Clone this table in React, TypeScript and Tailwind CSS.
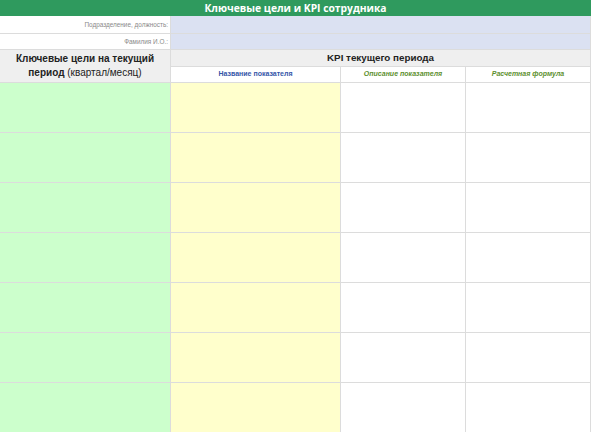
const ROWS = Array.from({ length: 7 }, (_, i) => i)

export default function App() {
  return (
    <div className="w-[591px] h-[432px] overflow-hidden bg-white font-['Liberation_Sans',Arial,sans-serif]">
      {/* Заголовок */}
      <div className="h-4 bg-[#2f9a5e] flex items-center justify-center text-white font-bold text-[10.3px] leading-none font-['Open_Sans','Liberation_Sans',sans-serif]">
        Ключевые цели и KPI сотрудника
      </div>

      <div className="grid grid-cols-[170px_169px_124px_1fr] grid-rows-[17px_15px_16px_15px_repeat(7,49px)] gap-px bg-[#dcdcdc] border-r border-[#dcdcdc]">
        <div className="bg-white flex items-center justify-end pr-[2px] text-[6.4px] text-[#8a8a8a]">
          Подразделение, должность:
        </div>
        <div className="col-span-3 bg-[#dbe1f2]" />
        <div className="bg-white flex items-center justify-end pr-[2px] text-[6.4px] text-[#8a8a8a]">
          Фамилия И.О.:
        </div>
        <div className="col-span-3 bg-[#dbe1f2]" />

        <div className="row-span-2 bg-[#efefef] flex items-center justify-center text-center text-[10px] leading-[14px] text-[#222]">
          <p>
            <span className="font-bold">Ключевые цели на текущий</span>
            <br />
            <span className="font-bold">период</span> (квартал/месяц)
          </p>
        </div>
        <div className="col-span-3 bg-[#efefef] flex items-center justify-center font-bold text-[9.8px] text-[#222]">
          KPI текущего периода
        </div>

        <div className="bg-white flex items-center justify-center font-bold text-[7px] text-[#3556a8]">
          Название показателя
        </div>
        <div className="bg-white flex items-center justify-center font-bold italic text-[7px] text-[#5c8f2e]">
          Описание показателя
        </div>
        <div className="bg-white flex items-center justify-center font-bold italic text-[7px] text-[#5c8f2e]">
          Расчетная формула
        </div>

        {ROWS.map((r) => (
          <div key={r} className="contents">
            <div className="bg-[#ccffcc]" />
            <div className="bg-[#ffffcc]" />
            <div className="bg-white" />
            <div className="bg-white" />
          </div>
        ))}
      </div>
    </div>
  )
}
